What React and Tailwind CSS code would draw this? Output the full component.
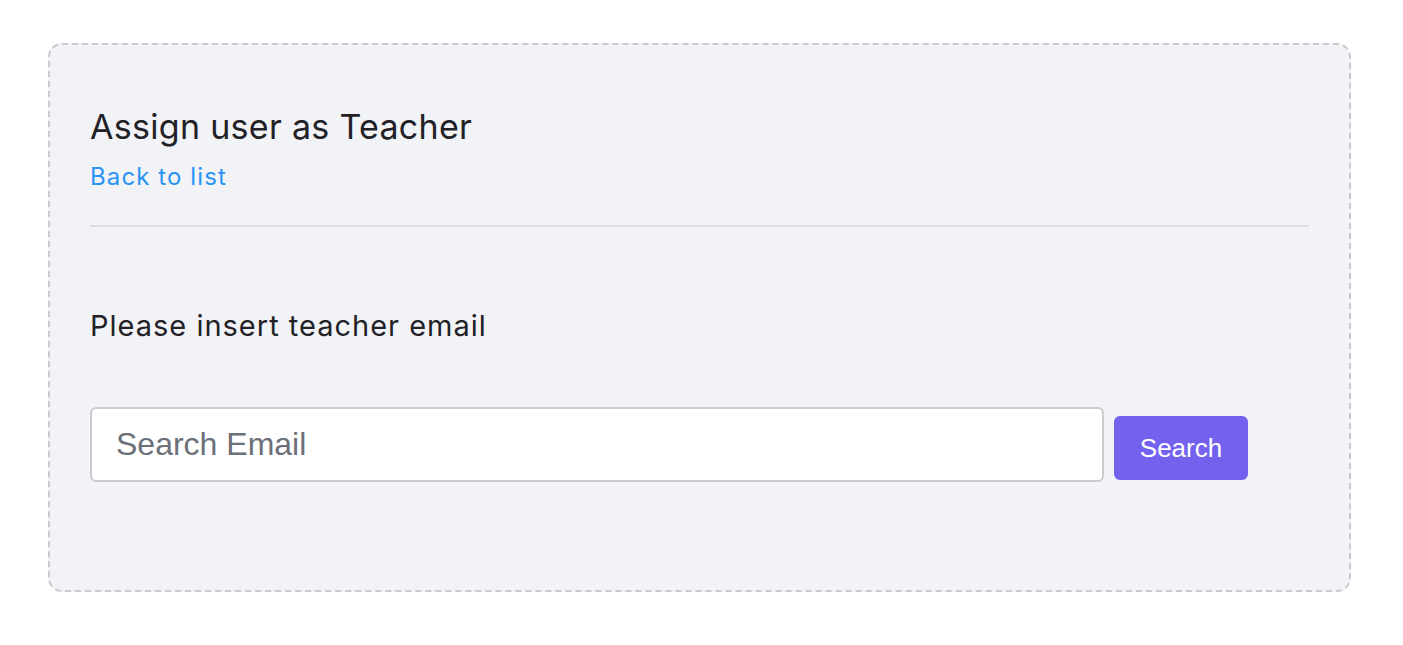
import React from "react";

const App = () => {
  return (
    <div className="min-h-screen bg-white px-[48px] pt-[43px]" style={{ fontFamily: "Inter, 'Noto Sans', sans-serif" }}>
      <div className="w-[1303px] h-[549px] rounded-[14px] border-2 border-dashed border-[#c9cace] bg-[#f2f3f7] px-[40px] pt-[62px]">
        {/* Header */}
        <h1 className="text-[34px] leading-[40px] tracking-[0.3px] text-[#222226] font-normal">Assign user as Teacher</h1>
        <a href="#" className="block mt-[15px] text-[24px] leading-[30px] tracking-[1.1px] text-[#2a93f3]">Back to list</a>
        <div className="mt-[33px] h-[2px] bg-[#dcdde1]"></div>

        {/* Form */}
        <p className="mt-[81px] text-[29px] leading-[36px] tracking-[1px] text-[#222226]">Please insert teacher email</p>
        <div className="mt-[63px] flex items-start gap-[10px]">
          <input
            type="text"
            placeholder="Search Email"
            className="w-[1014px] h-[75px] rounded-[6px] border-2 border-[#cbccd1] bg-white px-[24px] text-[32px] text-[#222] placeholder:text-[#6b7079] outline-none"
            style={{ fontFamily: "'Liberation Sans', Arial, sans-serif" }}
          />
          <button
            className="mt-[9px] w-[134px] h-[64px] rounded-[6px] bg-[#7462ef] text-white text-[26px]"
            style={{ fontFamily: "'Liberation Sans', Arial, sans-serif" }}
          >
            Search
          </button>
        </div>
      </div>
    </div>
  );
};

export default App;
